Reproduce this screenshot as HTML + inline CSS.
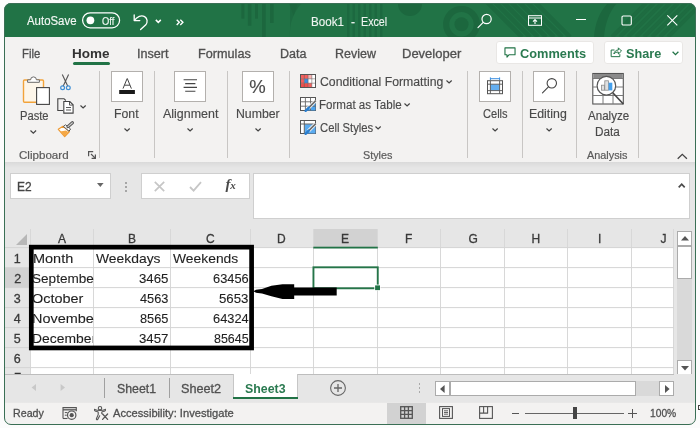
<!DOCTYPE html>
<html lang="en">
<head>
<meta charset="utf-8">
<title>Book1 - Excel</title>
<style>
html,body{margin:0;padding:0}
body{width:700px;height:428px;overflow:hidden;position:relative;background:#fcfcfc;font-family:"Liberation Sans",sans-serif}
#win{position:absolute;left:4px;top:3px;width:692px;height:422px;border-radius:7px;overflow:hidden;background:#f3f2f1}
#c{position:absolute;left:-4px;top:-3px;width:700px;height:428px;will-change:transform}
#frame{position:absolute;left:4px;top:3px;width:692px;height:422px;border-radius:7px;border:1px solid #3a6f55;box-sizing:border-box;pointer-events:none}
.a{position:absolute}
.t{position:absolute;white-space:pre;transform-origin:0 0;font-family:"Liberation Sans",sans-serif}
svg{position:absolute;overflow:visible}
.sep{position:absolute;width:1px;background:#c8c6c4;top:71px;height:87px}
.box{position:absolute;box-sizing:border-box;background:#fff;border:1px solid #bdbdbd}
.vl{position:absolute;width:1px;background:#d8d8d8}
.hl{position:absolute;height:1px;background:#d4d4d4}

</style>
</head>
<body>
<div id="win"><div id="c">

<!-- ===== Title bar ===== -->
<div class="a" style="left:4px;top:3px;width:692px;height:34px;background:#217346"></div>
<svg style="left:4px;top:3px;overflow:hidden" width="692" height="34" viewBox="4 3 692 34">
  <g fill="#1c673e">
    <rect x="241.400" y="3" width="3" height="15.600"/><rect x="247.900" y="3" width="3.500" height="22.700"/><rect x="255" y="3" width="3" height="15.600"/>
    <rect x="262" y="3" width="3.700" height="34"/><rect x="270" y="3" width="3.600" height="20"/>
    <path d="M289 3h9l-4.500 13z"/>
    <path d="M347 3h2.500v34h-2.500zM352.500 3h2.500v34h-2.500zM358 3h2.500v34h-2.500zM363.500 3h2.500v34h-2.500zM369 3h2.500v34h-2.500zM374.500 3h2.500v34h-2.500zM380 3h2.500v34h-2.500z" opacity=".8"/>
    <path d="M290 37c-1-12 3-25 12-34h-12z" opacity=".7"/>
    <circle cx="410" cy="4" r="12"/>
    <circle cx="461.500" cy="24.300" r="7"/>
    <path d="M594 37c1-14 6-26 14-34h9c-8 9-12 21-13 34z"/>
  </g>
  <circle cx="461.500" cy="24.300" r="15.300" fill="none" stroke="#1c673e" stroke-width="6.200"/>
  <g stroke="#1d6a40" stroke-width="4.500" fill="none">
    <path d="M482 -3l40 40M490 -3l40 40M498 -3l40 40M506 -3l40 40M514 -3l40 40M522 -3l40 40M530 -3l40 40"/>
  </g>
  <g stroke="#1e6c41" stroke-width="4" fill="none">
    <path d="M612 37l34-34M620 37l34-34M628 37l34-34M636 37l34-34M644 37l34-34M652 37l34-34M660 37l34-34M668 37l34-34"/>
  </g>
</svg>
<!-- autosave toggle -->
<svg style="left:81px;top:11px" width="40" height="18" viewBox="81 11 40 18" fill="none" stroke="#fff" stroke-width="1.25"><rect x="82.600" y="12.800" width="37" height="15" rx="7.500"/></svg>
<svg style="left:86px;top:16px" width="9" height="9" viewBox="0 0 9 9"><circle cx="4.400" cy="4.300" r="3.900" fill="#fff"/></svg>
<!-- undo -->
<svg style="left:132px;top:12px" width="18" height="19" viewBox="0 0 18 19" fill="none" stroke="#fff" stroke-width="1.3" stroke-linecap="round" stroke-linejoin="round">
  <path d="M2.2 3v5.6h5.6"/><path d="M2.6 8.2C5 4.6 9.4 2.6 12.6 4.6c3 1.9 3.2 5.6 1.2 8.2L8.6 17.6"/>
</svg>
<svg style="left:154.5px;top:18.5px" width="7" height="5" viewBox="0 0 7 5" fill="none" stroke="#fff" stroke-width="1.5"><path d="M.8.900l2.500 2.500L5.800.9"/></svg>
<svg style="left:175.5px;top:18.5px" width="9" height="7" viewBox="0 0 9 7" fill="none" stroke="#fff" stroke-width="1.400"><path d="M.7.700l2.600 2.600-2.600 2.600M4.300.7l2.600 2.600-2.600 2.600"/></svg>
<!-- search -->
<svg style="left:477px;top:13px" width="16" height="16" viewBox="0 0 16 16" fill="none" stroke="#fff" stroke-width="1.2" stroke-linecap="round"><circle cx="9.6" cy="6" r="4.6"/><path d="M6.2 9.4L1 14.6"/></svg>
<!-- ribbon display -->
<svg style="left:528px;top:14.5px" width="14" height="11" viewBox="0 0 14 11" fill="none" stroke="#fff" stroke-width="1"><rect x=".5" y=".7" width="13" height="9.6"/><path d="M.5 3h13"/><path d="M7 9V4.800M5 6.600L7 4.600l2 2" stroke-width="1.1"/></svg>
<!-- min / max / close -->
<div class="a" style="left:576px;top:19px;width:10px;height:1px;background:#fff"></div>
<svg style="left:621px;top:14.5px" width="11" height="11" viewBox="0 0 11 11" fill="none" stroke="#fff" stroke-width="1.100"><rect x="1" y="1" width="9.300" height="9" rx="1.200"/></svg>
<svg style="left:667px;top:15px" width="11" height="11" viewBox="0 0 11 11" stroke="#fff" stroke-width="1.1" fill="none"><path d="M.3.3l10 10M10.3.3L.3 10.3"/></svg>

<!-- ===== Tabs row ===== -->
<div class="a" style="left:72.5px;top:62px;width:37.5px;height:3px;background:#217346;border-radius:1.5px"></div>
<div class="box" style="left:496px;top:41px;width:98px;height:23px;border-color:#e9e7e5;border-radius:3px"></div>
<div class="box" style="left:603.5px;top:41px;width:79px;height:23px;border-color:#e9e7e5;border-radius:3px"></div>
<svg style="left:504px;top:46.500px" width="12" height="11" viewBox="0 0 13 12" fill="none" stroke="#217346" stroke-width="1.2" stroke-linejoin="round"><path d="M1 1h11v7.4H5.6L3.2 11V8.4H1z"/></svg>
<svg style="left:609.5px;top:46px" width="12.500" height="12" viewBox="0 0 15 14" fill="none" stroke="#217346" stroke-width="1.2" stroke-linejoin="round"><path d="M5.4 4.6H1.4v8h10.4V9.6"/><path d="M4.6 9.4c.6-3 2.6-4.8 5.4-4.8V2l3.8 3.8L10 9.4V7c-2.2 0-4 .6-5.4 2.4z"/></svg>
<svg style="left:672px;top:51px" width="7" height="5" viewBox="0 0 7 5" fill="none" stroke="#217346" stroke-width="1.3"><path d="M.6.8l2.9 2.8L6.4.8"/></svg>

<!-- ===== Ribbon ===== -->
<div class="sep" style="left:99px"></div>
<div class="sep" style="left:154px"></div>
<div class="sep" style="left:227px"></div>
<div class="sep" style="left:288.5px"></div>
<div class="sep" style="left:467px"></div>
<div class="sep" style="left:521.5px"></div>
<div class="sep" style="left:576px"></div>
<div class="sep" style="left:638px"></div>
<!-- big buttons -->
<div class="box" style="left:111px;top:71px;width:32px;height:31px;border-color:#b3b0ad"></div>
<div class="box" style="left:174px;top:71px;width:32px;height:31px;border-color:#b3b0ad"></div>
<div class="box" style="left:242px;top:71px;width:32px;height:31px;border-color:#b3b0ad"></div>
<div class="box" style="left:479px;top:71px;width:32px;height:31px;border-color:#b3b0ad"></div>
<div class="box" style="left:533px;top:71px;width:32px;height:31px;border-color:#b3b0ad"></div>

<!-- paste icon -->
<svg style="left:20px;top:73px" width="32" height="34" viewBox="20 73 32 34">
  <rect x="23.5" y="80" width="20" height="22.3" rx="1" fill="#fdf6ea" stroke="#f2a33a" stroke-width="1.4"/>
  <path d="M27.6 82.300v-2.500h3a2.900 2.900 0 0 1 5.800 0h3v2.500z" fill="#fff" stroke="#6a6a6a" stroke-width="1"/>
  <rect x="36.600" y="87.600" width="12.800" height="16.800" fill="#fff" stroke="#444" stroke-width="1.100"/>
</svg>
<svg style="left:30px;top:129.500px" width="7" height="4" viewBox="0 0 7 4" fill="none" stroke="#444" stroke-width="1.200"><path d="M.5.500l2.800 2.700L6.100.5"/></svg>
<!-- scissors -->
<svg style="left:59px;top:73px" width="13" height="18" viewBox="59 73 13 18" fill="none">
  <path d="M62.300 74.600l5.500 11.600M68.600 74.600l-5.500 11.600" stroke="#555" stroke-width="1.100"/>
  <circle cx="62.600" cy="87.800" r="1.900" stroke="#3f8fd6" stroke-width="1.200"/>
  <circle cx="68.300" cy="87.800" r="1.900" stroke="#3f8fd6" stroke-width="1.200"/>
</svg>
<!-- copy -->
<svg style="left:56px;top:97px" width="20" height="18" viewBox="56 97 20 18" fill="none" stroke="#444" stroke-width="1.100">
  <path d="M63 110.500h-5.200V98.700h6.200l1.800 1.800"/>
  <path d="M63.800 101.500h6l3.300 3.300v8.300h-9.300z" fill="#fff"/>
  <path d="M69.500 101.700v3.400h3.400" stroke-width=".9"/>
  <path d="M66 107.500h5M66 110h5" stroke-width=".9"/>
</svg>
<svg style="left:80px;top:104.500px" width="7" height="4" viewBox="0 0 7 4" fill="none" stroke="#444" stroke-width="1.200"><path d="M.5.500l2.600 2.500L5.700.5"/></svg>
<!-- format painter -->
<svg style="left:57px;top:121px" width="18" height="17" viewBox="57 121 18 17" fill="none">
  <path d="M58.300 129.300l4.600-3 6.600 5.200-4.800 5z" fill="#fff" stroke="#ee9a32" stroke-width="1.200" stroke-linejoin="round"/>
  <path d="M60.200 131.500l5.800-1 2.400 1.600-3.800 4.200z" fill="#f5a845"/>
  <path d="M63.400 126.400l2.200-1.600 5 4.200-1.600 2.200z" fill="#fff" stroke="#555" stroke-width="1" stroke-linejoin="round"/>
  <path d="M68 126.600l4.400-3.800" stroke="#555" stroke-width="3.200" stroke-linecap="round"/>
  <path d="M68 126.600l4.400-3.800" stroke="#cfcfcf" stroke-width="1.200" stroke-linecap="round"/>
</svg>
<!-- dialog launcher -->
<svg style="left:88px;top:150.5px" width="8" height="8" viewBox="0 0 8 8" fill="none" stroke="#555" stroke-width="1.2"><path d="M.6 5.200V.6h4.600"/><path d="M3 3l4.200 4.200M7.400 3.600v3.800H3.600"/></svg>
<!-- Font icon -->
<svg style="left:118px;top:77px" width="18" height="18" viewBox="118 77 18 18" fill="none">
  <path d="M123 88.600l4.100-10h.2l4.100 10M124.500 85.200h5.400" stroke="#444" stroke-width="1"/>
  <rect x="119.200" y="90" width="15.700" height="4" fill="#1a1a1a"/>
</svg>
<!-- Alignment icon -->
<svg style="left:183px;top:79px" width="15" height="13" viewBox="183 79 15 13" stroke="#444" stroke-width="1.100">
  <path d="M183.600 79.800h13.400M185.200 83.600h10.200M183.600 87.400h13.400M185.200 91.200h10.200"/>
</svg>
<!-- CF icon -->
<svg style="left:300px;top:74px" width="16" height="14" viewBox="0 0 16 14">
  <rect x=".5" y=".5" width="15" height="13" fill="#fff"/>
  <rect x=".5" y=".5" width="7.600" height="4.300" fill="#f4605e"/><rect x="8.100" y=".5" width="3.700" height="4.300" fill="#f9b4b2"/>
  <rect x=".5" y="4.800" width="3.800" height="4.400" fill="#f4605e"/><rect x="4.300" y="4.800" width="3.800" height="4.400" fill="#3b8ee0"/>
  <rect x=".5" y="9.200" width="7.600" height="4.300" fill="#ef4f4d"/><rect x="8.100" y="9.200" width="3.700" height="4.300" fill="#f4605e"/>
  <path d="M4.300.5v13M8.100.5v13M11.800.5v13M.5 4.800h15M.5 9.200h15" stroke="#6a5a5a" stroke-width=".7" fill="none" opacity=".75"/>
  <rect x=".5" y=".5" width="15" height="13" fill="none" stroke="#555"/>
</svg>
<!-- Format as table icon -->
<svg style="left:300px;top:97px" width="17" height="15" viewBox="0 0 17 15" fill="none">
  <rect x=".5" y=".5" width="15" height="13" fill="#fff" stroke="#555"/>
  <path d="M5.500 13.500l10-9.500v9.500z" fill="#4ba3ee"/>
  <path d="M.5 4.800h15M.5 9.200h15M5.400.5v13M10.500.5v13" stroke="#666" stroke-width=".9"/>
  <path d="M15.800 3.600L8.400 11" stroke="#fff" stroke-width="3.400"/>
  <path d="M15.800 3.600L8.600 10.800" stroke="#6e6e6e" stroke-width="1.800"/>
  <path d="M8.800 10.600L5.600 13.800" stroke="#2b7fd0" stroke-width="2.400" stroke-linecap="round"/>
</svg>
<!-- Cell styles icon -->
<svg style="left:300px;top:120px" width="17" height="15" viewBox="0 0 17 15" fill="none">
  <rect x=".5" y=".5" width="15" height="13" fill="#fff" stroke="#555"/>
  <path d="M4.500 4.200h11v9.300h-11z" fill="#5aabf0"/>
  <path d="M.5 4h15M4.300.5v13" stroke="#555" stroke-width=".9"/>
  <path d="M15.800 3.600L8.400 11" stroke="#fff" stroke-width="3.400"/>
  <path d="M15.800 3.600L8.600 10.800" stroke="#6e6e6e" stroke-width="1.800"/>
  <path d="M8.800 10.600L5.600 13.800" stroke="#2b7fd0" stroke-width="2.400" stroke-linecap="round"/>
</svg>
<svg style="left:446px;top:80px" width="7" height="4" viewBox="0 0 7 4" fill="none" stroke="#444" stroke-width="1.200"><path d="M.5.500l2.600 2.500L5.700.5"/></svg>
<svg style="left:404px;top:103px" width="7" height="4" viewBox="0 0 7 4" fill="none" stroke="#444" stroke-width="1.200"><path d="M.5.500l2.600 2.500L5.700.5"/></svg>
<svg style="left:375px;top:125.500px" width="7" height="4" viewBox="0 0 7 4" fill="none" stroke="#444" stroke-width="1.200"><path d="M.5.500l2.600 2.500L5.700.5"/></svg>
<!-- chevrons under big buttons -->
<svg style="left:123.500px;top:127.500px" width="7" height="4" viewBox="0 0 7 4" fill="none" stroke="#444" stroke-width="1.200"><path d="M.5.500l2.600 2.500L5.700.5"/></svg>
<svg style="left:187px;top:127.500px" width="7" height="4" viewBox="0 0 7 4" fill="none" stroke="#444" stroke-width="1.200"><path d="M.5.500l2.600 2.500L5.700.5"/></svg>
<svg style="left:254.500px;top:127.500px" width="7" height="4" viewBox="0 0 7 4" fill="none" stroke="#444" stroke-width="1.200"><path d="M.5.500l2.600 2.500L5.700.5"/></svg>
<svg style="left:491.500px;top:127.500px" width="7" height="4" viewBox="0 0 7 4" fill="none" stroke="#444" stroke-width="1.200"><path d="M.5.500l2.600 2.500L5.700.5"/></svg>
<svg style="left:546px;top:127.500px" width="7" height="4" viewBox="0 0 7 4" fill="none" stroke="#444" stroke-width="1.200"><path d="M.5.500l2.600 2.500L5.700.5"/></svg>
<!-- Cells icon -->
<svg style="left:486px;top:77px" width="18" height="18" viewBox="486 77 18 18" fill="none">
  <rect x="487.500" y="80.700" width="15" height="13" fill="#fff" stroke="#555" stroke-width="1"/>
  <rect x="490.500" y="84.300" width="9" height="6.200" fill="#63aef0"/>
  <path d="M487.500 84.200h15M487.500 90.600h15M490.400 80.700v13M499.600 80.700v13" stroke="#555" stroke-width=".9"/>
  <path d="M490.400 77.400v2.600M499.600 77.400v2.600M490.400 78.700h9.200" stroke="#3b8ee0" stroke-width="1"/>
</svg>
<!-- Editing icon -->
<svg style="left:541px;top:77px" width="17" height="17" viewBox="541 77 17 17" fill="none" stroke="#444" stroke-width="1.100" stroke-linecap="round"><circle cx="551.800" cy="83.300" r="4.700"/><path d="M548.400 86.800l-5.900 6"/></svg>
<!-- Analyze icon -->
<svg style="left:592px;top:73px" width="32" height="32" viewBox="592 73 32 32" fill="none">
  <rect x="592.800" y="73.500" width="30.500" height="30.500" fill="#fff" stroke="#555" stroke-width="1.100"/>
  <rect x="593.300" y="74" width="29.500" height="4.500" fill="#8a8a8a"/>
  <path d="M592.800 78.500h30.500M592.800 87h30.500M592.800 95.500h30.500M603 78.500v25.500M613 78.500v25.500" stroke="#7a7a7a" stroke-width="1"/>
  <path d="M613 93l10.300 11" stroke="#444" stroke-width="1.600"/>
  <path d="M613.500 94l9.800 10v-10z" fill="#fff" opacity=".0"/>
  <circle cx="606.400" cy="85.700" r="9.300" fill="#fff" stroke="#555" stroke-width="1.200"/>
  <rect x="601.600" y="85.200" width="3" height="5" fill="#e0e0e0" stroke="#8a8a8a" stroke-width=".8"/>
  <rect x="604.800" y="80.800" width="3.600" height="9.400" fill="#e0e0e0" stroke="#8a8a8a" stroke-width=".8"/>
  <rect x="608.600" y="82.700" width="3.700" height="7.700" fill="#46a0ec"/>
</svg>
<!-- collapse ribbon -->
<svg style="left:677px;top:153px" width="11" height="7" viewBox="0 0 11 7" fill="none" stroke="#444" stroke-width="1.300"><path d="M.7 5.800L5.300 1.300l4.600 4.500"/></svg>


<!-- ===== below ribbon ===== -->
<div class="a" style="left:4px;top:162px;width:692px;height:262px;background:#e6e6e6"></div>
<div class="a" style="left:4px;top:162px;width:692px;height:6px;background:linear-gradient(#d9d9d9,#dedede 2px,#e6e6e6)"></div>
<!-- formula bar -->
<div class="box" style="left:10px;top:173px;width:101px;height:26px;border-color:#cfcfcf"></div>
<svg style="left:97px;top:183px" width="7" height="4" viewBox="0 0 7 4"><path d="M0 0h6.600L3.300 3.900z" fill="#666"/></svg>
<div class="a" style="left:125px;top:181.500px;width:2px;height:2px;background:#a6a6a6"></div>
<div class="a" style="left:125px;top:185.500px;width:2px;height:2px;background:#a6a6a6"></div>
<div class="a" style="left:125px;top:189.500px;width:2px;height:2px;background:#a6a6a6"></div>
<div class="box" style="left:141px;top:173px;width:109px;height:26px;border-color:#cfcfcf"></div>
<svg style="left:154px;top:181px" width="11" height="11" viewBox="0 0 11 11" fill="none" stroke="#c6c6c6" stroke-width="1.700"><path d="M.8.800l9.400 9.400M10.200.8L.8 10.200"/></svg>
<svg style="left:189px;top:181px" width="13" height="11" viewBox="0 0 13 11" fill="none" stroke="#c6c6c6" stroke-width="1.800"><path d="M1 6l3.600 3.600L12 1.200"/></svg>
<span class="t" style="left:225.500px;top:177px;font-family:'Liberation Serif',serif;font-style:italic;font-weight:700;font-size:15px;line-height:15px;color:#4a4a4a;letter-spacing:-.3px">f<span style="font-size:11px">x</span></span>
<div class="box" style="left:253px;top:173px;width:437px;height:46px;border-color:#cfcfcf"></div>
<svg style="left:677.5px;top:182.5px" width="8" height="5" viewBox="0 0 8 5" fill="none" stroke="#4a4a4a" stroke-width="1.7"><path d="M.7 4.300L3.700 1.200l3 3.100"/></svg>

<!-- ===== Grid ===== -->
<div class="a" style="left:30px;top:248px;width:644px;height:127px;background:#fff"></div>
<div class="a" style="left:313.3px;top:229px;width:64.5px;height:19px;background:#d2d2d2"></div>
<div class="a" style="left:5px;top:268px;width:25px;height:20px;background:#d2d2d2"></div>
<div class="vl" style="left:30px;top:229px;height:146px"></div>
<div class="vl" style="left:93px;top:229px;height:146px"></div>
<div class="vl" style="left:170px;top:229px;height:146px"></div>
<div class="vl" style="left:250px;top:229px;height:146px"></div>
<div class="vl" style="left:313px;top:229px;height:146px"></div>
<div class="vl" style="left:377px;top:229px;height:146px"></div>
<div class="vl" style="left:440px;top:229px;height:146px"></div>
<div class="vl" style="left:504px;top:229px;height:146px"></div>
<div class="vl" style="left:567px;top:229px;height:146px"></div>
<div class="vl" style="left:631px;top:229px;height:146px"></div>
<div class="vl" style="left:673px;top:229px;height:146px"></div>
<svg style="left:0;top:0" width="700" height="428" viewBox="0 0 700 428"><path d="M5 247.6H674M5 267.6H674M5 287.6H674M5 307.6H674M5 327.6H674M5 347.6H674M5 367.6H674" stroke="#d4d4d4" stroke-width="1" fill="none"/></svg>
<svg style="left:16px;top:234px" width="11" height="11" viewBox="0 0 11 11"><path d="M11 0v11H0z" fill="#b7b7b7"/></svg>
<span class="t" style="left:14.2px;top:372px;font-size:12.5px;line-height:12.5px;color:#333;-webkit-text-stroke:.3px #333">7</span>
<!-- selection -->
<svg style="left:0;top:0" width="700" height="428" viewBox="0 0 700 428">
  <rect x="313.300" y="246.700" width="64.500" height="1.800" fill="#217346"/>
  <rect x="29" y="268" width="1.800" height="20" fill="#217346"/>
  <rect x="313.450" y="267.300" width="64.300" height="21" fill="none" stroke="#257549" stroke-width="1.900"/>
  <rect x="374.300" y="284.600" width="6.200" height="6" fill="#fff"/>
  <rect x="375.100" y="285.400" width="4.900" height="4.700" fill="#217346"/>
</svg>
<!-- black box + arrow -->
<svg style="left:0;top:0" width="700" height="428" viewBox="0 0 700 428"><rect x="31.3" y="247.15" width="220.3" height="100.8" fill="none" stroke="#000" stroke-width="4.7"/></svg>
<svg style="left:250px;top:280px" width="90" height="22" viewBox="250 280 90 22"><path d="M253.5 291.2L256 289.7L262 289L271.4 285.7L282.5 284.3H294.2V287.6H336.7V295.5H294.2V299H282.5L271.4 296.2L262 293.6L256 292.8Z" fill="#000"/></svg>
<!-- vertical scrollbar -->
<div class="a" style="left:674px;top:229px;width:22px;height:146px;background:#e6e6e6"></div>
<div class="a" style="left:677px;top:279px;width:15px;height:81px;background:#d9d9d9"></div>
<div class="box" style="left:677px;top:231px;width:15px;height:15px;border-color:#ababab"></div>
<svg style="left:680.5px;top:236px" width="8" height="5" viewBox="0 0 8 5"><path d="M0 4.600h8L4 0z" fill="#555"/></svg>
<div class="box" style="left:677px;top:246px;width:15px;height:33px;border-color:#ababab"></div>
<div class="box" style="left:677px;top:360px;width:15px;height:15px;border-color:#ababab"></div>
<svg style="left:680.5px;top:365.5px" width="8" height="5" viewBox="0 0 8 5"><path d="M0 0h8L4 4.600z" fill="#555"/></svg>

<!-- ===== Sheet tabs ===== -->
<div class="a" style="left:4px;top:374px;width:692px;height:28px;background:#e6e6e6"></div>
<div class="a" style="left:4px;top:374px;width:670px;height:1px;background:#bdbdbd"></div>
<svg style="left:31px;top:384px" width="6" height="8" viewBox="0 0 6 8"><path d="M5 0v7L.6 3.500z" fill="#c8c8c8"/></svg>
<svg style="left:60px;top:384px" width="6" height="8" viewBox="0 0 6 8"><path d="M.6 0v7L5 3.500z" fill="#c8c8c8"/></svg>
<div class="a" style="left:104px;top:378px;width:1px;height:20px;background:#a0a0a0"></div>
<div class="a" style="left:169px;top:378px;width:1px;height:20px;background:#a0a0a0"></div>
<div class="a" style="left:233px;top:374px;width:65px;height:24px;background:#fff;box-sizing:border-box;border-left:1px solid #c6c6c6;border-right:1px solid #c6c6c6"></div>
<div class="a" style="left:233px;top:397px;width:65px;height:2px;background:#217346"></div>
<svg style="left:330px;top:380px" width="16" height="16" viewBox="0 0 16 16" fill="none" stroke="#666" stroke-width="1.100"><circle cx="8" cy="8" r="7.400"/><path d="M8 4v8M4 8h8" stroke-width="1.300"/></svg>
<div class="a" style="left:418.500px;top:383px;width:1.500px;height:1.500px;background:#aaa"></div>
<div class="a" style="left:418.500px;top:387px;width:1.500px;height:1.500px;background:#aaa"></div>
<div class="a" style="left:418.500px;top:391px;width:1.500px;height:1.500px;background:#aaa"></div>
<!-- h scrollbar -->
<div class="a" style="left:435px;top:381px;width:239px;height:15px;background:#d9d9d9"></div>
<div class="box" style="left:435px;top:381px;width:15px;height:15px;border-color:#ababab"></div>
<svg style="left:440px;top:384.500px" width="5" height="8" viewBox="0 0 5 8"><path d="M4.600 0v8L0 4z" fill="#555"/></svg>
<div class="box" style="left:450px;top:381px;width:186px;height:15px;border-color:#ababab"></div>
<div class="box" style="left:659px;top:381px;width:15px;height:15px;border-color:#ababab"></div>
<svg style="left:664.500px;top:384.500px" width="5" height="8" viewBox="0 0 5 8"><path d="M0 0v8l4.600-4z" fill="#555"/></svg>

<!-- ===== Status bar ===== -->
<div class="a" style="left:4px;top:402px;width:692px;height:23px;background:linear-gradient(#dedede,#f3f2f1 1px)"></div>

<div class="a" style="left:387px;top:403px;width:39px;height:20.5px;background:#d2d2d2"></div>

<!-- macro icon -->
<svg style="left:62px;top:406px" width="16" height="15" viewBox="62 406 16 15" fill="none" stroke="#555" stroke-width="1.1">
  <path d="M63 418.500V407.600h13.300v3.600"/><path d="M63 409.800h13.300" stroke-width="1.300"/><path d="M63 418.500h4.500"/><path d="M64.800 412.600h2.700M64.800 415.200h2" stroke-width="1"/>
  <circle cx="71.700" cy="415.200" r="4.200" stroke-width="1.200"/><circle cx="71.700" cy="415.200" r="2.100" fill="#555" stroke="none"/>
</svg>
<!-- accessibility icon -->
<svg style="left:93px;top:405px" width="17" height="17" viewBox="93 405 17 17" fill="none" stroke="#555" stroke-width="1.100" stroke-linecap="round" stroke-linejoin="round">
  <circle cx="100" cy="408.200" r="1.700"/>
  <path d="M94.700 409.400c-.5.800 0 1.500.8 1.700l2.700.9v2.600l-1.800 4.200c-.3.800.8 1.300 1.300.600l2-3.600"/>
  <path d="M105.300 409.400c.5.800 0 1.500-.8 1.700l-2.700.9v1.600"/>
  <path d="M94.700 409.400c1.800.800 3.500 1.100 5.300 1.100s3.500-.3 5.300-1.100"/>
  <path d="M102.600 414l5 5.400M107.600 414l-5 5.400" stroke-width="1.300"/>
</svg>
<!-- normal view -->
<svg style="left:399.6px;top:406px" width="13" height="13" viewBox="0 0 13 13" fill="none" stroke="#555" stroke-width="1.3">
  <rect x=".7" y=".7" width="11.6" height="11.6"/><path d="M.7 4.6h11.6M.7 8.4h11.6M4.6 .7v11.6M8.4 .7v11.6"/>
</svg>
<!-- page layout -->
<svg style="left:439px;top:406px" width="14" height="13" viewBox="0 0 14 13" fill="none" stroke="#555" stroke-width="1.1">
  <rect x=".6" y=".6" width="12.8" height="11.8"/><rect x="3.5" y="2.6" width="7" height="7.8" stroke-width="1"/><path d="M5 4.800h4M5 6.500h4M5 8.200h4" stroke-width=".9"/>
</svg>
<!-- page break -->
<svg style="left:479px;top:406px" width="14" height="13" viewBox="0 0 14 13" fill="none" stroke="#555" stroke-width="1.1">
  <rect x=".6" y=".6" width="12.800" height="11.800"/><path d="M4.600.6v6.500M8.600.6v6.500M.6 7.100h8.500"/>
</svg>
<div class="a" style="left:512px;top:412.500px;width:7px;height:1px;background:#555"></div>
<div class="a" style="left:525px;top:412.500px;width:99px;height:1px;background:#666"></div>
<div class="a" style="left:572.500px;top:407px;width:4px;height:12px;background:#444"></div>
<div class="a" style="left:628px;top:412.500px;width:9px;height:1px;background:#555"></div>
<div class="a" style="left:632px;top:408.500px;width:1px;height:9px;background:#555"></div>

<span class="t" style="left:26.50px;top:15px;font-size:12px;line-height:12px;color:#f4f8f5;-webkit-text-stroke:0.15px #f4f8f5;transform:scaleX(0.951);">AutoSave</span>
<span class="t" style="left:101.50px;top:16px;font-size:10.5px;line-height:10.5px;color:#f4f8f5;-webkit-text-stroke:0.15px #f4f8f5;transform:scaleX(0.893);">Off</span>
<span class="t" style="left:311.03px;top:16px;font-size:12px;line-height:12px;color:#f0f5f2;-webkit-text-stroke:0.1px #f0f5f2;transform:scaleX(0.969);">Book1</span>
<span class="t" style="left:351.00px;top:16px;font-size:12px;line-height:12px;color:#f0f5f2;-webkit-text-stroke:0.1px #f0f5f2;">-</span>
<span class="t" style="left:361.11px;top:16px;font-size:12px;line-height:12px;color:#f0f5f2;-webkit-text-stroke:0.1px #f0f5f2;transform:scaleX(0.893);">Excel</span>
<span class="t" style="left:22.36px;top:48px;font-size:12px;line-height:12px;color:#505050;-webkit-text-stroke:0.3px #505050;transform:scaleX(0.944);">File</span>
<span class="t" style="left:72.38px;top:48px;font-size:12px;line-height:12px;color:#333;font-weight:700;transform:scaleX(1.125);">Home</span>
<span class="t" style="left:136.95px;top:48px;font-size:12px;line-height:12px;color:#505050;-webkit-text-stroke:0.3px #505050;transform:scaleX(1.052);">Insert</span>
<span class="t" style="left:198.24px;top:48px;font-size:12px;line-height:12px;color:#505050;-webkit-text-stroke:0.3px #505050;transform:scaleX(1.055);">Formulas</span>
<span class="t" style="left:279.96px;top:48px;font-size:12px;line-height:12px;color:#505050;-webkit-text-stroke:0.3px #505050;transform:scaleX(1.042);">Data</span>
<span class="t" style="left:334.96px;top:48px;font-size:12px;line-height:12px;color:#505050;-webkit-text-stroke:0.3px #505050;transform:scaleX(1.039);">Review</span>
<span class="t" style="left:402.42px;top:48px;font-size:12px;line-height:12px;color:#505050;-webkit-text-stroke:0.3px #505050;transform:scaleX(1.083);">Developer</span>
<span class="t" style="left:519.50px;top:48px;font-size:12.5px;line-height:12.5px;color:#2a7a50;font-weight:700;transform:scaleX(1.023);">Comments</span>
<span class="t" style="left:625.98px;top:48px;font-size:12.5px;line-height:12.5px;color:#2a7a50;font-weight:700;transform:scaleX(1.015);">Share</span>
<span class="t" style="left:19.57px;top:110px;font-size:12px;line-height:12px;color:#4a4a4a;-webkit-text-stroke:0.15px #4a4a4a;transform:scaleX(0.931);">Paste</span>
<span class="t" style="left:114.48px;top:108px;font-size:12px;line-height:12px;color:#4a4a4a;-webkit-text-stroke:0.15px #4a4a4a;transform:scaleX(1.022);">Font</span>
<span class="t" style="left:163.00px;top:108px;font-size:12px;line-height:12px;color:#4a4a4a;-webkit-text-stroke:0.15px #4a4a4a;transform:scaleX(1.038);">Alignment</span>
<span class="t" style="left:235.98px;top:108px;font-size:12px;line-height:12px;color:#4a4a4a;-webkit-text-stroke:0.15px #4a4a4a;transform:scaleX(1.024);">Number</span>
<span class="t" style="left:319.50px;top:76px;font-size:12px;line-height:12px;color:#4a4a4a;-webkit-text-stroke:0.15px #4a4a4a;transform:scaleX(1.021);">Conditional Formatting</span>
<span class="t" style="left:318.54px;top:99px;font-size:12px;line-height:12px;color:#4a4a4a;-webkit-text-stroke:0.15px #4a4a4a;transform:scaleX(0.964);">Format as Table</span>
<span class="t" style="left:319.50px;top:122px;font-size:12px;line-height:12px;color:#4a4a4a;-webkit-text-stroke:0.15px #4a4a4a;transform:scaleX(0.938);">Cell Styles</span>
<span class="t" style="left:482.50px;top:108px;font-size:12px;line-height:12px;color:#4a4a4a;-webkit-text-stroke:0.15px #4a4a4a;transform:scaleX(0.923);">Cells</span>
<span class="t" style="left:529.47px;top:108px;font-size:12px;line-height:12px;color:#4a4a4a;-webkit-text-stroke:0.15px #4a4a4a;transform:scaleX(1.029);">Editing</span>
<span class="t" style="left:587.50px;top:110px;font-size:12px;line-height:12px;color:#4a4a4a;-webkit-text-stroke:0.15px #4a4a4a;transform:scaleX(0.964);">Analyze</span>
<span class="t" style="left:595.02px;top:126px;font-size:12px;line-height:12px;color:#4a4a4a;-webkit-text-stroke:0.15px #4a4a4a;transform:scaleX(0.979);">Data</span>
<span class="t" style="left:19.20px;top:150px;font-size:11px;line-height:11px;color:#5a5a5a;-webkit-text-stroke:0.2px #5a5a5a;transform:scaleX(1.053);">Clipboard</span>
<span class="t" style="left:363.02px;top:150px;font-size:11px;line-height:11px;color:#5a5a5a;-webkit-text-stroke:0.2px #5a5a5a;transform:scaleX(0.983);">Styles</span>
<span class="t" style="left:587.00px;top:150px;font-size:11px;line-height:11px;color:#5a5a5a;-webkit-text-stroke:0.2px #5a5a5a;transform:scaleX(0.988);">Analysis</span>
<span class="t" style="left:249.20px;top:78px;font-size:18.5px;line-height:18.5px;color:#4a4a4a;-webkit-text-stroke:0.15px #4a4a4a;">%</span>
<span class="t" style="left:17.31px;top:181px;font-size:12px;line-height:12px;color:#444;-webkit-text-stroke:0.3px #444;transform:scaleX(0.992);">E2</span>
<span class="t" style="left:58.00px;top:233px;font-size:12px;line-height:12px;color:#3a3a3a;-webkit-text-stroke:0.3px #3a3a3a;">A</span>
<span class="t" style="left:128.00px;top:233px;font-size:12px;line-height:12px;color:#3a3a3a;-webkit-text-stroke:0.3px #3a3a3a;">B</span>
<span class="t" style="left:206.00px;top:233px;font-size:12px;line-height:12px;color:#3a3a3a;-webkit-text-stroke:0.3px #3a3a3a;">C</span>
<span class="t" style="left:277.00px;top:233px;font-size:12px;line-height:12px;color:#3a3a3a;-webkit-text-stroke:0.3px #3a3a3a;">D</span>
<span class="t" style="left:341.00px;top:233px;font-size:12px;line-height:12px;color:#3a3a3a;-webkit-text-stroke:0.3px #3a3a3a;">E</span>
<span class="t" style="left:405.00px;top:233px;font-size:12px;line-height:12px;color:#3a3a3a;-webkit-text-stroke:0.3px #3a3a3a;">F</span>
<span class="t" style="left:468.50px;top:233px;font-size:12px;line-height:12px;color:#3a3a3a;-webkit-text-stroke:0.3px #3a3a3a;">G</span>
<span class="t" style="left:531.50px;top:233px;font-size:12px;line-height:12px;color:#3a3a3a;-webkit-text-stroke:0.3px #3a3a3a;">H</span>
<span class="t" style="left:598.00px;top:233px;font-size:12px;line-height:12px;color:#3a3a3a;-webkit-text-stroke:0.3px #3a3a3a;">I</span>
<span class="t" style="left:660.50px;top:233px;font-size:12px;line-height:12px;color:#3a3a3a;-webkit-text-stroke:0.3px #3a3a3a;">J</span>
<span class="t" style="left:13.80px;top:253px;font-size:12.5px;line-height:12.5px;color:#3a3a3a;-webkit-text-stroke:0.3px #3a3a3a;">1</span>
<span class="t" style="left:14.30px;top:273px;font-size:12.5px;line-height:12.5px;color:#3a3a3a;-webkit-text-stroke:0.3px #3a3a3a;">2</span>
<span class="t" style="left:13.80px;top:293px;font-size:12.5px;line-height:12.5px;color:#3a3a3a;-webkit-text-stroke:0.3px #3a3a3a;">3</span>
<span class="t" style="left:13.80px;top:313px;font-size:12.5px;line-height:12.5px;color:#3a3a3a;-webkit-text-stroke:0.3px #3a3a3a;">4</span>
<span class="t" style="left:13.80px;top:333px;font-size:12.5px;line-height:12.5px;color:#3a3a3a;-webkit-text-stroke:0.3px #3a3a3a;">5</span>
<span class="t" style="left:13.80px;top:353px;font-size:12.5px;line-height:12.5px;color:#3a3a3a;-webkit-text-stroke:0.3px #3a3a3a;">6</span>
<span class="t" style="left:32.89px;top:252px;font-size:13px;line-height:13px;color:#1f1f1f;-webkit-text-stroke:0.1px #1f1f1f;transform:scaleX(1.114);">Month</span>
<span class="t" style="left:96.00px;top:252px;font-size:13px;line-height:13px;color:#1f1f1f;-webkit-text-stroke:0.1px #1f1f1f;transform:scaleX(1.067);">Weekdays</span>
<span class="t" style="left:173.00px;top:252px;font-size:13px;line-height:13px;color:#1f1f1f;-webkit-text-stroke:0.1px #1f1f1f;transform:scaleX(1.066);">Weekends</span>
<span class="t" style="left:31.96px;top:272px;font-size:13px;line-height:13px;color:#1f1f1f;-webkit-text-stroke:0.1px #1f1f1f;transform:scaleX(1.043);">Septembe</span>
<span class="t" style="left:138.98px;top:272px;font-size:13px;line-height:13px;color:#1f1f1f;-webkit-text-stroke:0.1px #1f1f1f;transform:scaleX(1.019);">3465</span>
<span class="t" style="left:212.51px;top:272px;font-size:13px;line-height:13px;color:#1f1f1f;-webkit-text-stroke:0.1px #1f1f1f;transform:scaleX(0.986);">63456</span>
<span class="t" style="left:31.89px;top:292px;font-size:13px;line-height:13px;color:#1f1f1f;-webkit-text-stroke:0.1px #1f1f1f;transform:scaleX(1.111);">October</span>
<span class="t" style="left:140.00px;top:292px;font-size:13px;line-height:13px;color:#1f1f1f;-webkit-text-stroke:0.1px #1f1f1f;transform:scaleX(0.982);">4563</span>
<span class="t" style="left:219.48px;top:292px;font-size:13px;line-height:13px;color:#1f1f1f;-webkit-text-stroke:0.1px #1f1f1f;transform:scaleX(1.019);">5653</span>
<span class="t" style="left:31.89px;top:312px;font-size:13px;line-height:13px;color:#1f1f1f;-webkit-text-stroke:0.1px #1f1f1f;transform:scaleX(1.111);">Novembe</span>
<span class="t" style="left:140.00px;top:312px;font-size:13px;line-height:13px;color:#1f1f1f;-webkit-text-stroke:0.1px #1f1f1f;transform:scaleX(0.982);">8565</span>
<span class="t" style="left:212.51px;top:312px;font-size:13px;line-height:13px;color:#1f1f1f;-webkit-text-stroke:0.1px #1f1f1f;transform:scaleX(0.986);">64324</span>
<span class="t" style="left:31.93px;top:332px;font-size:13px;line-height:13px;color:#1f1f1f;-webkit-text-stroke:0.1px #1f1f1f;transform:scaleX(1.068);clip-path:inset(0 3.22px 0 0);">December</span>
<span class="t" style="left:138.98px;top:332px;font-size:13px;line-height:13px;color:#1f1f1f;-webkit-text-stroke:0.1px #1f1f1f;transform:scaleX(1.019);">3457</span>
<span class="t" style="left:213.50px;top:332px;font-size:13px;line-height:13px;color:#1f1f1f;-webkit-text-stroke:0.1px #1f1f1f;transform:scaleX(0.958);">85645</span>
<span class="t" style="left:117.01px;top:383px;font-size:12.5px;line-height:12.5px;color:#505050;-webkit-text-stroke:0.3px #505050;transform:scaleX(0.987);">Sheet1</span>
<span class="t" style="left:180.99px;top:383px;font-size:12.5px;line-height:12.5px;color:#505050;-webkit-text-stroke:0.3px #505050;transform:scaleX(1.013);">Sheet2</span>
<span class="t" style="left:245.01px;top:383px;font-size:12.5px;line-height:12.5px;color:#2a7a50;font-weight:700;transform:scaleX(0.988);">Sheet3</span>
<span class="t" style="left:12.73px;top:408px;font-size:11px;line-height:11px;color:#505050;-webkit-text-stroke:0.3px #505050;transform:scaleX(0.971);">Ready</span>
<span class="t" style="left:113.00px;top:408px;font-size:11px;line-height:11px;color:#505050;-webkit-text-stroke:0.3px #505050;transform:scaleX(1.013);">Accessibility: Investigate</span>
<span class="t" style="left:649.57px;top:408px;font-size:11px;line-height:11px;color:#505050;-webkit-text-stroke:0.3px #505050;transform:scaleX(0.933);">100%</span>
</div></div>
<div id="frame"></div>
<div class="a" style="left:697.6px;top:404.6px;width:4px;height:5.4px;border:1px solid #444;border-right:0;box-sizing:border-box"></div>

</body>
</html>
